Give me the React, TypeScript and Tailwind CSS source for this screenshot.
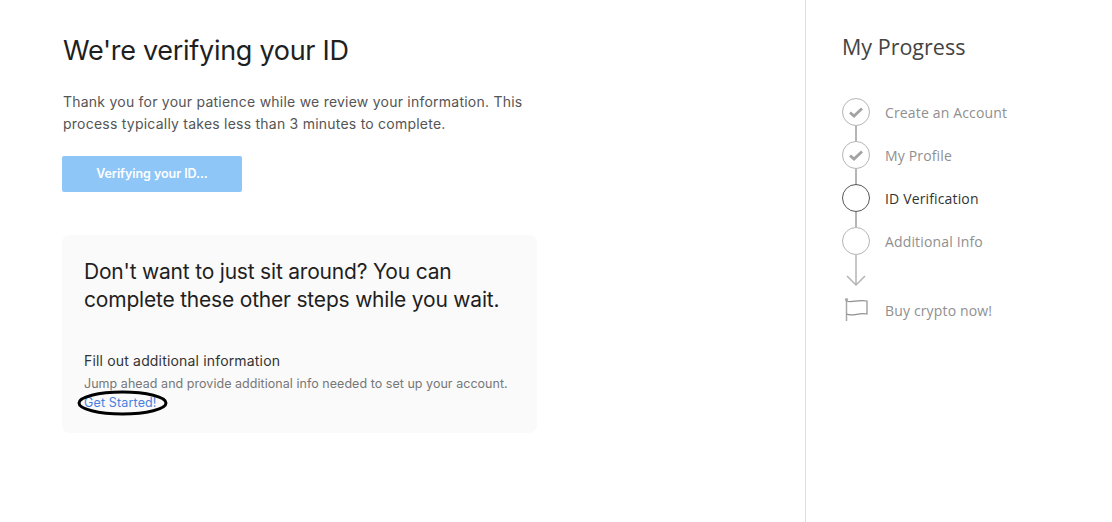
import React from "react";

const inter = { fontFamily: "Inter, sans-serif" };

function Check() {
  return (
    <svg width="16" height="13" viewBox="0 0 16 13" fill="none">
      <path d="M2 6.5 L6 10 L14 2.5" stroke="#a3a3a3" strokeWidth="2.8" />
    </svg>
  );
}

function Step({ label, state }: { label: string; state: "done" | "current" | "todo" }) {
  return (
    <div className="flex items-center h-[28px] gap-[15px]">
      <div
        className={
          "w-[28px] h-[28px] rounded-full border flex items-center justify-center " +
          (state === "current" ? "border-[#555555]" : "border-[#b5b5b5]")
        }
      >
        {state === "done" && <Check />}
      </div>
      <span className={"text-[14px] tracking-[0.15px] " + (state === "current" ? "text-[#333333]" : "text-[#8f8f8f]")}>{label}</span>
    </div>
  );
}

function Connector() {
  return <div className="w-[2px] h-[15px] ml-[13px] bg-[#b5b5b5]" />;
}

export default function App() {
  return (
    <div className="flex h-[522px] w-[1112px] bg-white overflow-hidden" style={inter}>
      <main className="w-[805px] pl-[62px] pt-[32px]">
        <h1 className="text-[27px] leading-[38px] text-[#1f1f1f] ml-px tracking-[-0.29px]">We're verifying your ID</h1>
        <p className="mt-[21px] ml-px w-[480px] text-[14px] leading-[22px] text-[#555555] tracking-[0.23px]">
          Thank you for your patience while we review your information. This process typically takes less than 3 minutes to complete.
        </p>
        <button className="mt-[21px] w-[180px] h-[36px] rounded-[2px] bg-[#8dc6f7] text-white text-[12.5px] tracking-[-0.05px] font-semibold flex items-center justify-center">
          Verifying your ID...
        </button>
        <section className="mt-[43px] w-[475px] h-[198px] rounded-[8px] bg-[#fafafa] pl-[22px] pt-[23px]">
          <h2 className="text-[21px] leading-[28px] text-[#1f1f1f] tracking-[-0.2px] w-[440px]">
            Don't want to just sit around? You can complete these other steps while you wait.
          </h2>
          <h3 className="mt-[37px] text-[14px] leading-[20px] text-[#333333] tracking-[0.17px]">Fill out additional information</h3>
          <p className="mt-[4px] text-[12.5px] leading-[18px] text-[#777777] tracking-[0.04px] whitespace-nowrap">
            Jump ahead and provide additional info needed to set up your account.
          </p>
          <div className="relative w-fit mt-px">
            <a className="block text-[12.5px] leading-[18px] text-[#4a7fe0] tracking-[0.15px]">Get Started!</a>
            <svg className="absolute left-[-7px] top-[-4px]" width="92" height="26" viewBox="0 0 92 26" fill="none">
              <ellipse cx="45.5" cy="13" rx="43.5" ry="11" stroke="#000000" strokeWidth="3" />
            </svg>
          </div>
        </section>
      </main>
      <aside className="w-[307px] border-l border-[#dedede] pl-[36px] pt-[32px]" style={{ fontFamily: '"Open Sans", sans-serif' }}>
        <h2 className="text-[21.5px] leading-[30px] text-[#444444]">My Progress</h2>
        <div className="mt-[36px] flex flex-col">
          <Step label="Create an Account" state="done" />
          <Connector />
          <Step label="My Profile" state="done" />
          <Connector />
          <Step label="ID Verification" state="current" />
          <Connector />
          <Step label="Additional Info" state="todo" />
          <svg className="ml-[4px]" width="22" height="32" viewBox="0 0 22 32" fill="none">
            <path d="M10 0 V30 M1 21 L10 30 L19 21" stroke="#b5b5b5" strokeWidth="1.5" />
          </svg>
          <div className="flex items-center mt-[10px] gap-[15px]">
            <svg width="28" height="26" viewBox="0 0 28 26" fill="none">
              <path d="M4.5 3 V24" stroke="#a8a8a8" strokeWidth="1.5" />
              <circle cx="4.5" cy="2.5" r="1.6" fill="#a8a8a8" />
              <path d="M4.5 4 C10 6 15 2.5 25 4 V17 C17 15 11 20 4.5 17" stroke="#8f8f8f" strokeWidth="1.2" />
            </svg>
            <span className="text-[14px] tracking-[0.15px] text-[#8f8f8f]">Buy crypto now!</span>
          </div>
        </div>
      </aside>
    </div>
  );
}
